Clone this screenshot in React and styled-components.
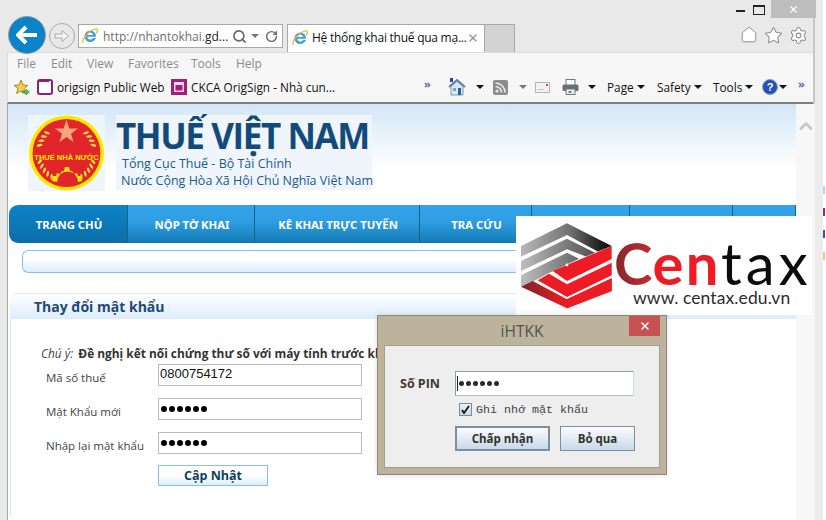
import React from 'react'
import styled, { createGlobalStyle } from 'styled-components'
import { Search, RotateCw, Settings, Star, Home, X, ChevronUp } from 'lucide-react'

const GlobalStyle = createGlobalStyle`
  html, body { margin: 0; padding: 0; background: #fff; }
  * { box-sizing: border-box; }
`

const UI_FONT = `"Open Sans", "Noto Sans", sans-serif`

const IeSvg = styled.svg`
  flex: none;
`
const IeLogo = () => (
  <IeSvg width="16" height="16" viewBox="0 0 16 16">
    <path d="M8.200 2.500a5.900 5.900 0 0 1 5.900 6.200H5.300c.2 1.700 1.400 2.900 3.100 2.900 1.200 0 2.200-.6 2.700-1.500h2.800c-.7 2.300-3 4-5.600 4a5.900 5.900 0 0 1-5.900-5.800 5.900 5.900 0 0 1 5.800-5.800zm-2.800 4.400h5.600c-.2-1.500-1.300-2.500-2.800-2.500s-2.600 1-2.800 2.500z" fill="#3f9fdc" />
    <path d="M1.200 15C-.2 13 3 7.500 7 4.200 10.500 1.300 14.500.2 15.400 1.500c.5.900-.4 2.400-1.300 3.600" fill="none" stroke="#efb02c" strokeWidth="1.200" />
  </IeSvg>
)

const Caret = styled.i`
  display: block;
  width: 0;
  height: 0;
  flex: none;
  border-left: 4px solid transparent;
  border-right: 4px solid transparent;
  border-top: 4px solid ${p => p.$light ? '#777' : '#111'};
  margin-left: ${p => p.$left || 0}px;
`

const Page = styled.div`
  width: 826px;
  height: 520px;
  display: flex;
  position: relative;
  overflow: hidden;
  background: #fff;
`
const Browser = styled.div`
  width: 815px;
  height: 520px;
  flex: none;
  display: flex;
  flex-direction: column;
  background: #e9e9e9;
  border-right: 2px solid #c6c6c6;
`
const Gutter = styled.div`
  width: 8px;
  flex: none;
  background: #ececec;
`
const Desktop = styled.div`
  width: 3px;
  flex: none;
  display: flex;
  flex-direction: column;
  gap: 14px;
  padding-top: 186px;
  background: #fff;
`
const Fragment = styled.span`
  display: block;
  width: 2px;
  height: 8px;
  background: ${p => p.$color};
`
const WindowControls = styled.div`
  height: 18px;
  flex: none;
  display: flex;
  justify-content: flex-end;
  align-items: stretch;
`
const MinBtn = styled.div`
  width: 26px;
  display: flex;
  align-items: flex-end;
  justify-content: center;
  padding-bottom: 6px;
  &::before { content: ''; width: 9px; height: 2px; background: #222; }
`
const MaxBtn = styled.div`
  width: 18px;
  display: flex;
  align-items: flex-start;
  justify-content: flex-start;
  padding-top: 5px;
  &::before { content: ''; width: 10px; height: 7px; border: 1px solid #222; border-top-width: 2px; }
`
const CloseBtn = styled.div`
  width: 45px;
  margin-right: -3px;
  position: relative;
  background: #bdbdbd;
  color: #fff;
  display: flex;
  align-items: center;
  justify-content: center;
`
const NavRow = styled.div`
  height: 34px;
  flex: none;
  display: flex;
  align-items: flex-end;
  padding-left: 8px;
  position: relative;
  z-index: 1;
`
const BackBtn = styled.div`
  width: 38px;
  height: 38px;
  margin-bottom: -2px;
  flex: none;
  border-radius: 50%;
  background: #0a83c8;
  border: 1px solid #9a9a9a;
  display: flex;
  align-items: center;
  justify-content: center;
`
const ForwardBtn = styled.div`
  width: 26px;
  height: 26px;
  margin: 0 3px 3px 3px;
  flex: none;
  border-radius: 50%;
  border: 1px solid #aaa;
  display: flex;
  align-items: center;
  justify-content: center;
`
const AddressBar = styled.div`
  width: 205px;
  height: 24px;
  margin-bottom: 4px;
  flex: none;
  display: flex;
  align-items: center;
  padding-left: 3px;
  background: #fff;
  border: 1px solid #a8a8a8;
  font: 12px ${UI_FONT};
  color: #6e6e6e;
  white-space: nowrap;
  overflow: hidden;
  b { font-weight: 400; color: #222; }
`
const UrlText = styled.span`
  margin-left: 5px;
  width: 129px;
  flex: none;
`
const SearchIcon = styled(Search)`
  flex: none;
`
const RefreshIcon = styled(RotateCw)`
  flex: none;
  margin-left: 6px;
`
const Tab = styled.div`
  width: 198px;
  height: 28px;
  margin-left: 4px;
  flex: none;
  display: flex;
  align-items: center;
  padding: 0 5px 2px 4px;
  background: #fff;
  border: 1px solid #a8a8a8;
  border-bottom: none;
  font: 12px ${UI_FONT};
  letter-spacing: -0.25px;
  color: #111;
  white-space: nowrap;
`
const TabTitle = styled.span`
  margin-left: 4px;
  flex: 1;
`
const NewTab = styled.div`
  width: 30px;
  height: 28px;
  flex: none;
  background: #d3d3d3;
  border: 1px solid #a8a8a8;
  border-left: none;
  border-bottom: none;
`
const ChromeIcons = styled.div`
  margin-left: auto;
  height: 34px;
  display: flex;
  align-items: center;
  gap: 6px;
  padding-right: 5px;
`
const ToolPanel = styled.div`
  height: 52px;
  flex: none;
  margin-left: 7px;
  background: #f6f6f6;
  border-top: 1px solid #dcdcdc;
  border-left: 1px solid #dcdcdc;
  border-bottom: 2px solid #7f7f7f;
  display: flex;
  flex-direction: column;
`
const MenuBar = styled.div`
  height: 20px;
  flex: none;
  display: flex;
  align-items: center;
  padding-left: 9px;
  font: 12px ${UI_FONT};
  color: #8b8b8b;
`
const MenuItem = styled.span`
  width: ${p => p.$w}px;
  flex: none;
`
const FavBar = styled.div`
  height: 28px;
  flex: none;
  display: flex;
  align-items: center;
  padding-left: 5px;
  font: 11.8px ${UI_FONT};
  color: #111;
  white-space: nowrap;
`
const FavLink = styled.div`
  display: flex;
  align-items: center;
  gap: 4px;
  width: ${p => p.$w}px;
  flex: none;
  overflow: hidden;
  svg { flex: none; }
`
const Chevrons = styled.span`
  flex: none;
  margin: -7px 0 0 ${p => p.$left || 0}px;
  font: 700 11px ${UI_FONT};
  color: #6a6ab0;
  width: ${p => p.$w}px;
`
const CommandItem = styled.div`
  display: flex;
  align-items: center;
  flex: none;
  width: ${p => p.$w}px;
`
const Body = styled.div`
  flex: 1;
  display: flex;
  min-height: 0;
`
const LeftEdge = styled.div`
  width: 8px;
  flex: none;
  border-right: 1px solid #a8a8a8;
`
const Content = styled.div`
  width: 788px;
  flex: none;
  display: flex;
  flex-direction: column;
  background: linear-gradient(#d3e6f7, #fff 66px);
`
const Scrollbar = styled.div`
  flex: 1;
  background: #f7f7f7;
  display: flex;
  justify-content: center;
  padding-top: 12px;
  color: #c8c8c8;
`
const Masthead = styled.header`
  height: 101px;
  flex: none;
  display: flex;
  padding: 11px 0 0 20px;
`
const Emblem = styled.div`
  width: 77px;
  height: 76px;
  flex: none;
  background: #eef5fc;
`
const Brand = styled.div`
  width: 256px;
  height: 75px;
  margin-left: 11px;
  flex: none;
  background: #eff5fb;
  color: #1b5a8c;
`
const BrandTitle = styled.h1`
  margin: 0;
  height: 40px;
  padding-top: 2px;
  font: 700 35px/38px "Open Sans", sans-serif;
  color: #134a7c;
  white-space: nowrap;
  letter-spacing: -1.4px;
`
const BrandLine = styled.div`
  font: 12.5px/17px ${UI_FONT};
  padding-left: ${p => p.$left}px;
  white-space: nowrap;
`
const MainNav = styled.nav`
  height: 38px;
  flex: none;
  margin-left: 1px;
  display: flex;
  border-radius: 9px 0 0 9px;
  overflow: hidden;
`
const NavItem = styled.a`
  width: ${p => p.$w}px;
  flex: none;
  display: flex;
  align-items: center;
  justify-content: center;
  padding-left: 2px;
  border-right: 1px solid #0f6a78;
  background: ${p => p.$active
    ? 'linear-gradient(#0d83c9, #0b6ea8)'
    : 'linear-gradient(#33a3ec, #2f9de2 45%, #127ab4)'};
  font: 700 11.3px "Noto Sans", sans-serif;
  color: #fff;
  white-space: nowrap;
`
const SearchPill = styled.div`
  height: 23px;
  flex: none;
  margin: 7px 0 0 14px;
  border: 1px solid #7fc4f8;
  border-right: none;
  border-radius: 6px 0 0 6px;
  background: linear-gradient(#fff 40%, #dcecff);
`
const PanelHeader = styled.div`
  height: 26px;
  flex: none;
  margin: 20px 0 0 2px;
  padding-left: 24px;
  display: flex;
  align-items: center;
  border-top: 1px solid #dfe9f4;
  border-radius: 6px 0 0 0;
  background: linear-gradient(#fff, #dcecfd);
  font: 700 14px ${UI_FONT};
  color: #1d4a75;
`
const PanelBody = styled.div`
  flex: 1;
  margin-left: 2px;
  padding: 25px 0 0 30px;
  border-left: 1px solid #dce9f6;
  border-bottom-left-radius: 6px;
  background: #fff;
`
const Notice = styled.p`
  margin: 0 0 2px 0;
  height: 18px;
  font: 11.9px/18px ${UI_FONT};
  color: #333;
  white-space: nowrap;
  em { color: #444; margin-right: 2px; }
  b { font-weight: 700; }
`
const Field = styled.div`
  display: flex;
  align-items: center;
  height: 22px;
  margin-bottom: 12px;
  padding-left: 5px;
`
const FieldLabel = styled.label`
  width: 112px;
  flex: none;
  font: 11.5px ${UI_FONT};
  color: #444;
  padding-top: 4px;
`
const TextBox = styled.div`
  width: 204px;
  height: 22px;
  flex: none;
  padding-left: 1px;
  border: 1px solid #bbb;
  background: #fff;
  font: 13px/17px "Liberation Sans", sans-serif;
  color: #111;
`
const PassDots = styled.div`
  display: flex;
  align-items: center;
  gap: ${p => p.$gap}px;
  height: 100%;
  padding-left: ${p => p.$left}px;
`
const Dot = styled.i`
  width: ${p => p.$size}px;
  height: ${p => p.$size}px;
  border-radius: 50%;
  background: ${p => p.$color};
`
const UpdateBtn = styled.button`
  display: block;
  width: 110px;
  height: 21px;
  margin: -1px 0 0 117px;
  padding: 0;
  border: 1px solid #86c0ee;
  background: linear-gradient(#fff 50%, #dcecfb);
  font: 700 12.5px ${UI_FONT};
  color: #0e3f60;
`

const CentaxBanner = styled.div`
  position: absolute;
  left: 516px;
  top: 216px;
  width: 296px;
  height: 99px;
  display: flex;
  background: #fff;
`
const CentaxCopy = styled.div`
  flex: none;
  display: flex;
  flex-direction: column;
  margin-left: -2px;
`
const CentaxWord = styled.div`
  height: 60px;
  margin-top: 17px;
  font: 400 58px/60px Lato, sans-serif;
  letter-spacing: 4px;
  color: #0c0c0c;
  white-space: nowrap;
`
const CentaxC = styled.span`
  font-weight: 700;
  letter-spacing: 0;
  background: linear-gradient(90deg, #83282c, #c22a30);
  -webkit-background-clip: text;
  background-clip: text;
  color: transparent;
`
const CentaxEn = styled.span`
  font-weight: 700;
  letter-spacing: 2.5px;
  color: #ed1c24;
`
const CentaxUrl = styled.div`
  font: 17.5px/18px Lato, sans-serif;
  letter-spacing: 0.1px;
  color: #2c2c2c;
  margin: -4px 0 0 19px;
  white-space: nowrap;
`
const MarkSvg = styled.svg`
  flex: none;
`

const Dialog = styled.div`
  position: absolute;
  left: 377px;
  top: 315px;
  width: 290px;
  height: 160px;
  display: flex;
  flex-direction: column;
  padding: 0 6px 6px 6px;
  background: #bdb29c;
  border: 1px solid #8f8878;
  box-shadow: 0 0 6px rgba(0, 0, 0, 0.12);
`
const DialogTitleBar = styled.div`
  height: 29px;
  flex: none;
  display: flex;
  align-items: center;
  justify-content: center;
  position: relative;
  font: 15.5px ${UI_FONT};
  color: #55524a;
`
const DialogClose = styled.div`
  position: absolute;
  right: 0;
  top: 0;
  width: 31px;
  height: 20px;
  display: flex;
  align-items: center;
  justify-content: center;
  background: #c75050;
  color: #fff;
`
const DialogBody = styled.div`
  flex: 1;
  display: grid;
  grid-template-columns: 55px 179px;
  grid-auto-rows: min-content;
  padding: 25px 0 0 15px;
  background: #eeeeee;
  border: 1px solid #a39d8d;
`
const PinLabel = styled.div`
  align-self: center;
  font: 700 12.5px ${UI_FONT};
  color: #3f3a30;
`
const PinBox = styled.div`
  height: 25px;
  background: #fff;
  border: 1px solid #8e9aa8;
  border-right-color: #d5dbe2;
  border-bottom-color: #b7c0ca;
  display: flex;
  align-items: center;
  padding-left: 1px;
  &::before { content: ''; width: 1px; height: 15px; background: #222; }
`
const RememberRow = styled.label`
  grid-column: 2;
  display: flex;
  align-items: center;
  gap: 4px;
  height: 17px;
  margin: 5px 0 0 4px;
  font: 11.67px "Liberation Mono", monospace;
  color: #444;
  white-space: nowrap;
`
const CheckBox = styled.span`
  width: 13px;
  height: 13px;
  flex: none;
  display: flex;
  align-items: center;
  justify-content: center;
  border: 1px solid #7a8a9a;
  background: linear-gradient(#eef2f7, #c9d6e4);
  color: #111;
`
const DialogActions = styled.div`
  grid-column: 2;
  display: flex;
  gap: 10px;
  margin-top: 8px;
`
const DialogBtn = styled.button`
  width: ${p => p.$w}px;
  height: 25px;
  padding: 0;
  flex: none;
  border: ${p => p.$primary ? '2px solid #7d8ea0' : '1px solid #7d8ea0'};
  background: linear-gradient(#fbfcfd, #c8d8e8);
  font: 700 11.5px ${UI_FONT};
  color: #33332d;
`

const Dots = ({ size, gap, color, left }) => (
  <PassDots $gap={gap} $left={left}>
    {[0, 1, 2, 3, 4, 5].map(i => <Dot key={i} $size={size} $color={color} />)}
  </PassDots>
)

// wheat grains sit on a ring round the centre of the seal, skipping the text band
const GRAIN_ANGLES = [44, 54, 64, 74, 108, 118, 128, 138, 148]

const StateSeal = () => (
  <svg width="77" height="76" viewBox="0 0 77 76">
    <circle cx="38.500" cy="38" r="37.500" fill="#ffe800" />
    <circle cx="38.500" cy="38" r="34" fill="#e2252b" />
    <polygon points="38.500,5 41.300,13.500 50,13.500 43,18.700 45.500,27 38.500,22 31.500,27 34,18.700 27,13.500 35.700,13.500" fill="#f4a878" />
    {GRAIN_ANGLES.map(a => {
      const dx = 28 * Math.sin(a * Math.PI / 180)
      const dy = -28 * Math.cos(a * Math.PI / 180)
      return (
        <g key={a} fill="#f7e04a">
          <ellipse cx={38.5 + dx} cy={38 + dy} rx="3" ry="1.200" transform={`rotate(${a - 60} ${38.5 + dx} ${38 + dy})`} />
          <ellipse cx={38.5 - dx} cy={38 + dy} rx="3" ry="1.200" transform={`rotate(${60 - a} ${38.5 - dx} ${38 + dy})`} />
        </g>
      )
    })}
    <text x="38.500" y="45" textAnchor="middle" fontFamily="Liberation Sans, sans-serif" fontWeight="700" fontSize="7.500" fill="#ffe800">THUẾ NHÀ NƯỚC</text>
    <path d="M24 66l1-5 3 0 1-3 3 1 2-3h2l1-4h4l1 4h2l2 3 3-1 1 3 3 0 1 5-4 1a10 10 0 0 0-21 0z" fill="#ffe800" />
  </svg>
)

const CentaxMark = () => (
  <MarkSvg width="100" height="99" viewBox="0 0 100 99">
    <defs>
      <linearGradient id="cg" x1="0" x2="1" y1="0" y2="0">
        <stop offset="0" stopColor="#b9b9b9" />
        <stop offset="0.55" stopColor="#6f6f6f" />
        <stop offset="1" stopColor="#000" />
      </linearGradient>
      <linearGradient id="cg2" gradientUnits="userSpaceOnUse" x1="5" x2="80" y1="0" y2="0">
        <stop offset="0" stopColor="#bdbdbd" />
        <stop offset="1" stopColor="#4f4f4f" />
      </linearGradient>
      <linearGradient id="cr" gradientUnits="userSpaceOnUse" x1="5" x2="50" y1="0" y2="0">
        <stop offset="0" stopColor="#7c2428" />
        <stop offset="1" stopColor="#ed1c24" />
      </linearGradient>
    </defs>
    <polygon points="5,30 51,7.300 95.700,30 81.700,35.500 51,19 5,40.700" fill="url(#cg)" />
    <polygon points="5,45 51,22.700 79,36.700 70,40.500 51,33.300 5,55" fill="url(#cg2)" />
    <polygon points="5,59.300 51,36.700 63,42.700 33,57 20,64 5,70.700" fill="url(#cg2)" />
    <polygon points="95.700,30 95.700,43 51,65 36.700,55" fill="#ed1c24" />
    <polygon points="95.700,46.700 95.700,59.300 51,81 21.700,64.300 33,57.700 51,68.300" fill="#ed1c24" />
    <polygon points="95.700,62.300 95.700,75 51,92.300 5,70.700 16.700,65 51,83.300" fill="url(#cr)" />
    <polygon points="51,83.300 95.700,62.300 95.700,75 51,92.300" fill="#ed1c24" />
    <circle cx="51" cy="49" r="1.400" fill="#fff" />
  </MarkSvg>
)

const FavStar = () => (
  <svg width="17" height="17" viewBox="0 0 17 17">
    <polygon points="8,1 10,6 15,6.300 11,9.600 12.400,14.600 8,11.800 3.600,14.600 5,9.600 1,6.300 6,6" fill="#f6d24a" stroke="#a88a25" />
    <path d="M9 12h4v-2l3.500 3-3.500 3v-2H9z" fill="#5cb85c" stroke="#2e7d32" strokeWidth=".5" />
  </svg>
)

const OrigsignIcon = ({ solid }) => (
  <svg width="16" height="16" viewBox="0 0 16 16">
    {solid
      ? <><rect width="16" height="16" fill="#a51c7c" /><rect x="3" y="3" width="10" height="10" fill="#f3d8ea" /><rect x="4.500" y="6" width="7" height="5.500" fill="#a51c7c" /></>
      : <><rect x="1" y="1" width="14" height="14" rx="2" fill="#fff" stroke="#8e1f78" strokeWidth="2" /><rect x="1" y="1" width="11" height="2" fill="#8e1f78" /></>}
  </svg>
)

const HouseIcon = () => (
  <svg width="18" height="18" viewBox="0 0 18 18">
    <rect x="2" y="0" width="3" height="4" fill="#2a3fbf" />
    <path d="M1 9l8-7 8 7" fill="none" stroke="#5b7f9f" strokeWidth="2" />
    <path d="M3 8.500V17h12V8.500L9 3.500z" fill="#dbe7f0" stroke="#7b97ad" />
    <rect x="10" y="10" width="3" height="7" fill="#2a5fa5" />
    <rect x="5" y="10" width="3" height="3" fill="#7aa0c8" />
  </svg>
)

const RssIcon = () => (
  <svg width="15" height="15" viewBox="0 0 15 15">
    <rect width="15" height="15" rx="2" fill="#8c8c8c" />
    <circle cx="4" cy="11" r="1.600" fill="#e8e8e8" />
    <path d="M2.500 6.500a6 6 0 0 1 6 6M2.500 3a9.500 9.500 0 0 1 9.500 9.500" fill="none" stroke="#e8e8e8" strokeWidth="1.600" />
  </svg>
)

const MailIcon = () => (
  <svg width="15" height="11" viewBox="0 0 15 11">
    <rect x=".5" y=".5" width="14" height="10" fill="#f2f2f2" stroke="#b5b5b5" />
    <rect x="2" y="7" width="7" height="1" fill="#c9c9c9" />
    <rect x="11" y="2" width="2" height="2" fill="#d5474f" />
  </svg>
)

const PrintIcon = () => (
  <svg width="17" height="16" viewBox="0 0 17 16">
    <rect x="4" y=".5" width="9" height="6" fill="#fff" stroke="#777" />
    <rect x=".5" y="5.500" width="16" height="6.500" rx="1.500" fill="#6e6e6e" />
    <rect x="4" y="10" width="9" height="5.500" fill="#eee" stroke="#777" />
    <rect x="6.500" y="12" width="3" height="2" fill="#3b9c9c" />
  </svg>
)

const HelpIcon = () => (
  <svg width="16" height="16" viewBox="0 0 16 16">
    <circle cx="8" cy="8" r="7.500" fill="#2650b8" stroke="#8aa3c4" />
    <text x="8" y="12" textAnchor="middle" fontFamily="Liberation Sans, sans-serif" fontWeight="700" fontSize="11" fill="#fff">?</text>
  </svg>
)

const App = () => {
  return (
    <>
      <GlobalStyle />
      <Page>
        <Browser>
          <WindowControls>
            <MinBtn />
            <MaxBtn />
            <CloseBtn><X size={11} strokeWidth={2.5} /></CloseBtn>
          </WindowControls>
          <NavRow>
            <BackBtn>
              <svg width="22" height="20" viewBox="0 0 22 20">
                <path d="M10 2l-8 8 8 8M3 10h18" fill="none" stroke="#fff" strokeWidth="4" />
              </svg>
            </BackBtn>
            <ForwardBtn>
              <svg width="16" height="14" viewBox="0 0 16 14">
                <path d="M1 5h7V1.500L14.500 7 8 12.500V9H1z" fill="#f2f2f2" stroke="#aaa" />
              </svg>
            </ForwardBtn>
            <AddressBar>
              <IeLogo />
              <UrlText>http://nhantokhai.<b>gd...</b></UrlText>
              <SearchIcon size={15} color="#666" strokeWidth={2.6} />
              <Caret $light $left={4} />
              <RefreshIcon size={13} color="#666" strokeWidth={2.6} />
            </AddressBar>
            <Tab>
              <IeLogo />
              <TabTitle>Hệ thống khai thuế qua mạ...</TabTitle>
              <X size={12} color="#999" strokeWidth={3} />
            </Tab>
            <NewTab />
            <ChromeIcons>
              <Home size={18} color="#8c8c8c" fill="#fff" strokeWidth={1.3} />
              <Star size={19} color="#8c8c8c" fill="#fff" strokeWidth={1.3} />
              <Settings size={19} color="#8c8c8c" fill="#fff" strokeWidth={1.3} />
            </ChromeIcons>
          </NavRow>
          <ToolPanel>
            <MenuBar>
              <MenuItem $w={34}>File</MenuItem>
              <MenuItem $w={36}>Edit</MenuItem>
              <MenuItem $w={41}>View</MenuItem>
              <MenuItem $w={63}>Favorites</MenuItem>
              <MenuItem $w={45}>Tools</MenuItem>
              <MenuItem $w={40}>Help</MenuItem>
            </MenuBar>
            <FavBar>
              <FavLink $w={24}><FavStar /></FavLink>
              <FavLink $w={134}><OrigsignIcon />origsign Public Web</FavLink>
              <FavLink $w={255}><OrigsignIcon solid />CKCA OrigSign - Nhà cun...</FavLink>
              <Chevrons $w={24} $left={-2}>»</Chevrons>
              <CommandItem $w={45}><HouseIcon /><Caret $left={10} /></CommandItem>
              <CommandItem $w={42}><RssIcon /><Caret $light $left={11} /></CommandItem>
              <CommandItem $w={27}><MailIcon /></CommandItem>
              <CommandItem $w={45}><PrintIcon /><Caret $left={9} /></CommandItem>
              <CommandItem $w={50}>Page<Caret $left={3} /></CommandItem>
              <CommandItem $w={56}>Safety<Caret $left={3} /></CommandItem>
              <CommandItem $w={49}>Tools<Caret $left={3} /></CommandItem>
              <CommandItem $w={36}><HelpIcon /><Caret $left={1} /></CommandItem>
              <Chevrons $w={10}>»</Chevrons>
            </FavBar>
          </ToolPanel>
          <Body>
            <LeftEdge />
            <Content>
              <Masthead>
                <Emblem><StateSeal /></Emblem>
                <Brand>
                  <BrandTitle>THUẾ VIỆT NAM</BrandTitle>
                  <BrandLine $left={6}>Tổng Cục Thuế - Bộ Tài Chính</BrandLine>
                  <BrandLine $left={5}>Nước Cộng Hòa Xã Hội Chủ Nghĩa Việt Nam</BrandLine>
                </Brand>
              </Masthead>
              <MainNav>
                <NavItem $w={119} $active>TRANG CHỦ</NavItem>
                <NavItem $w={127}>NỘP TỜ KHAI</NavItem>
                <NavItem $w={165}>KÊ KHAI TRỰC TUYẾN</NavItem>
                <NavItem $w={112}>TRA CỨU</NavItem>
                <NavItem $w={98} />
                <NavItem $w={103} />
                <NavItem $w={63} />
              </MainNav>
              <SearchPill />
              <PanelHeader>Thay đổi mật khẩu</PanelHeader>
              <PanelBody>
                <Notice><em>Chú ý:</em> <b>Đề nghị kết nối chứng thư số với máy tính trước khi thực hiện</b></Notice>
                <Field>
                  <FieldLabel>Mã số thuế</FieldLabel>
                  <TextBox>0800754172</TextBox>
                </Field>
                <Field>
                  <FieldLabel>Mật Khẩu mới</FieldLabel>
                  <TextBox><Dots size={6} gap={2} color="#000" left={1} /></TextBox>
                </Field>
                <Field>
                  <FieldLabel>Nhập lại mật khẩu</FieldLabel>
                  <TextBox><Dots size={6} gap={2} color="#000" left={1} /></TextBox>
                </Field>
                <UpdateBtn>Cập Nhật</UpdateBtn>
              </PanelBody>
            </Content>
            <Scrollbar><ChevronUp size={20} strokeWidth={3.5} /></Scrollbar>
          </Body>
        </Browser>
        <Gutter />
        <Desktop>
          <Fragment $color="#b6d3ee" />
          <Fragment $color="#8a2f7a" />
          <Fragment $color="#3a4fc0" />
          <Fragment $color="#e8c98a" />
        </Desktop>
        <CentaxBanner>
          <CentaxMark />
          <CentaxCopy>
            <CentaxWord><CentaxC>C</CentaxC><CentaxEn>en</CentaxEn>tax</CentaxWord>
            <CentaxUrl>www. centax.edu.vn</CentaxUrl>
          </CentaxCopy>
        </CentaxBanner>
        <Dialog>
          <DialogTitleBar>
            iHTKK
            <DialogClose><X size={12} strokeWidth={3} /></DialogClose>
          </DialogTitleBar>
          <DialogBody>
            <PinLabel>Số PIN</PinLabel>
            <PinBox><Dots size={5} gap={2} color="#2a2a2a" left={1} /></PinBox>
            <RememberRow>
              <CheckBox>
                <svg width="9" height="9" viewBox="0 0 9 9">
                  <path d="M1 5l2 3 5-7" fill="none" stroke="#111" strokeWidth="1.800" />
                </svg>
              </CheckBox>
              Ghi nhớ mật khẩu
            </RememberRow>
            <DialogActions>
              <DialogBtn $w={95} $primary>Chấp nhận</DialogBtn>
              <DialogBtn $w={75}>Bỏ qua</DialogBtn>
            </DialogActions>
          </DialogBody>
        </Dialog>
      </Page>
    </>
  )
}

export default App
